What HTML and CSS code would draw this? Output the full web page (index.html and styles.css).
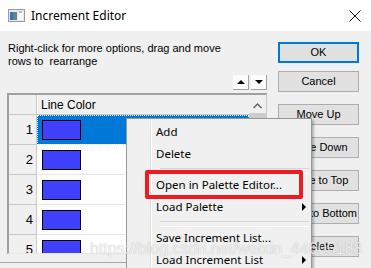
FILE: index.html
```html
<!DOCTYPE html>
<html lang="en">
<head>
  <meta charset="UTF-8" />
  <title>Increment Editor</title>
  <link rel="stylesheet" href="styles.css">
</head>
<body>
  <div class="window">
    <div class="titlebar">
      <svg class="app-icon" width="17" height="13" viewBox="0 0 17 13">
        <rect x="0.5" y="0.5" width="16" height="12" fill="#e8e8e8" stroke="#9a9a9a"/>
        <rect x="2" y="3" width="7" height="8" fill="#4d8f94"/>
        <rect x="2" y="3" width="3" height="8" fill="#3f6fae"/>
        <rect x="10" y="3" width="5" height="8" fill="#fafafa"/>
        <rect x="11" y="2" width="3" height="2" fill="#b8b8b8"/>
      </svg>
      <span class="title">Increment Editor</span>
      <svg class="close" width="12" height="12" viewBox="0 0 12 12">
        <path d="M0.5 0.5 L11.5 11.5 M11.5 0.5 L0.5 11.5" stroke="#111" stroke-width="1"/>
      </svg>
    </div>

    <div class="body">
      <div class="left">
        <p class="hint">Right-click for more options, drag and move<br>rows to&nbsp; rearrange</p>
        <div class="order-btns">
          <div class="mini"><span class="tri-up"></span></div>
          <div class="mini"><span class="tri-down"></span></div>
        </div>
        <div class="grid">
          <div class="grid-main">
            <div class="grid-row head">
              <div class="rh"></div>
              <div class="cell">Line Color</div>
            </div>
            <div class="grid-row selected">
              <div class="rh">1</div>
              <div class="cell"><span class="swatch"></span></div>
            </div>
            <div class="grid-row">
              <div class="rh">2</div>
              <div class="cell"><span class="swatch"></span></div>
            </div>
            <div class="grid-row">
              <div class="rh">3</div>
              <div class="cell"><span class="swatch"></span></div>
            </div>
            <div class="grid-row">
              <div class="rh">4</div>
              <div class="cell"><span class="swatch"></span></div>
            </div>
            <div class="grid-row">
              <div class="rh">5</div>
              <div class="cell"><span class="swatch"></span></div>
            </div>
          </div>
          <div class="vscroll">
            <svg class="chev" width="9" height="6" viewBox="0 0 9 6">
              <path d="M0.5 5 L4.5 1 L8.5 5" fill="none" stroke="#606060" stroke-width="1.4"/>
            </svg>
            <div class="thumb"></div>
          </div>
        </div>
        <div class="bottom-line"></div>
      </div>

      <div class="buttons">
        <div class="btn default">OK</div>
        <div class="btn">Cancel</div>
        <div class="btn gap">Move Up</div>
        <div class="btn gap">Move Down</div>
        <div class="btn gap">Move to Top</div>
        <div class="btn gap">Move to Bottom</div>
        <div class="btn gap">Delete</div>
      </div>
    </div>

    <!-- right-click menu over the grid -->
    <div class="menu">
      <div class="item">Add</div>
      <div class="item">Delete</div>
      <div class="sep"></div>
      <div class="item marked">Open in Palette Editor...<span class="mark"></span></div>
      <div class="item">Load Palette<span class="sub"></span></div>
      <div class="sep"></div>
      <div class="item">Save Increment List...</div>
      <div class="item">Load Increment List<span class="sub"></span></div>
    </div>

    <div class="watermark">https://blog.csdn.net/weixin_44605188</div>
  </div>
</body>
</html>
```

FILE: styles.css
```css
html, body {
  margin: 0;
  padding: 0;
}

body {
  width: 371px;
  height: 268px;
  overflow: hidden;
  background: #f0f0f0;
  font-family: "Liberation Sans", Arial, sans-serif;
  color: #000;
}

.window {
  position: relative;
  width: 371px;
  height: 268px;
  overflow: hidden;
}

.titlebar {
  height: 31px;
  background: #fff;
  display: flex;
  align-items: center;
}

.app-icon {
  margin-left: 8px;
  margin-top: -1px;
}

.title {
  margin-left: 6px;
  font-family: "Noto Sans", sans-serif;
  font-size: 12px;
  color: #000;
}

.close {
  margin-left: auto;
  margin-right: 10px;
}

.body {
  display: flex;
}

.left {
  width: 260px;
  padding-left: 7px;
}

.hint {
  margin: 0;
  padding: 11px 0 0 1px;
  font-size: 11px;
  line-height: 13px;
}

.order-btns {
  display: flex;
  justify-content: flex-end;
  gap: 2px;
  margin-top: 7px;
}

.mini {
  width: 15px;
  height: 14px;
  background: #fdfdfd;
  border-right: 1px solid #a0a0a0;
  border-bottom: 1px solid #a0a0a0;
  display: flex;
  align-items: center;
  justify-content: center;
}

.tri-up {
  width: 0;
  height: 0;
  border-left: 4px solid transparent;
  border-right: 4px solid transparent;
  border-bottom: 4px solid #000;
}

.tri-down {
  width: 0;
  height: 0;
  border-left: 4px solid transparent;
  border-right: 4px solid transparent;
  border-top: 4px solid #000;
}

.grid {
  margin-top: 3px;
  height: 158px;
  display: flex;
  border-top: 2px solid #a0a0a0;
  border-left: 2px solid #a0a0a0;
  border-right: 1px solid #c8c8c8;
  border-bottom: 1px solid #e8e8e8;
  background: #fff;
  overflow: hidden;
}

.grid-main {
  flex: 1;
}

.grid-row {
  display: flex;
  height: 30px;
}

.grid-row.head {
  height: 19px;
  background: #f0f0f0;
  border-bottom: 1px solid #c8c8c8;
}

.rh {
  width: 28px;
  background: #f0f0f0;
  border-right: 1px solid #c8c8c8;
  border-bottom: 1px solid #c8c8c8;
  box-sizing: border-box;
  text-align: right;
  padding-right: 3px;
  font-size: 13px;
  line-height: 30px;
}

.grid-row.head .rh {
  border-bottom: none;
}

.cell {
  flex: 1;
  box-sizing: border-box;
  border-bottom: 1px solid #e6e6e6;
  display: flex;
  align-items: center;
  padding-left: 5px;
}

.grid-row.head .cell {
  font-size: 12px;
  padding-left: 3px;
  border-bottom: none;
  border-left: 1px solid #fff;
}

.grid-row.selected .cell {
  background: #0078d7;
  outline: 1px dotted #fff;
  outline-offset: -1px;
}

.swatch {
  width: 37px;
  height: 18px;
  background: #4040ff;
  border: 1px solid #000;
}

.vscroll {
  width: 17px;
  background: #f0f0f0;
  display: flex;
  flex-direction: column;
  align-items: center;
}

.chev {
  margin-top: 8px;
}

.thumb {
  margin-top: 4px;
  width: 17px;
  height: 60px;
  background: #cdcdcd;
}

.bottom-line {
  margin-top: 8px;
  margin-left: -7px;
  border-top: 1px solid #a8a8a8;
}

.buttons {
  margin-left: 11px;
  padding-top: 11px;
  width: 81px;
}

.btn {
  box-sizing: border-box;
  height: 21px;
  background: #e1e1e1;
  border: 1px solid #adadad;
  font-size: 11px;
  line-height: 19px;
  text-align: center;
  white-space: nowrap;
  overflow: hidden;
  margin-top: 8px;
}

.btn.default {
  margin-top: 0;
  border: 2px solid #0078d7;
  line-height: 17px;
}

.btn.gap {
  margin-top: 12px;
}

.menu {
  position: absolute;
  left: 126px;
  top: 118px;
  width: 184px;
  height: 160px;
  padding: 2px 0;
  background: #f0f0f0;
  border: 1px solid #979797;
  box-shadow: 2px 2px 2px rgba(0, 0, 0, 0.25);
  font-family: "Noto Sans", sans-serif;
  font-size: 11.5px;
}

.menu::before {
  content: "";
  position: absolute;
  left: 23px;
  top: 2px;
  bottom: 0;
  width: 1px;
  background: #e0e0e0;
  border-right: 1px solid #fff;
}

.item {
  position: relative;
  height: 22px;
  line-height: 22px;
  padding-left: 29px;
}

.sep {
  height: 9px;
  margin-left: 33px;
  margin-right: 2px;
  box-sizing: border-box;
  border-bottom: 1px solid #fff;
  background: linear-gradient(#d7d7d7, #d7d7d7) 0 3px / 100% 1px no-repeat;
}

.mark {
  position: absolute;
  left: 18px;
  right: 8px;
  top: -4px;
  bottom: -3px;
  border: 4px solid #ed1c24;
  border-radius: 2px;
}

.sub {
  position: absolute;
  right: 5px;
  top: 7px;
  width: 0;
  height: 0;
  border-top: 4px solid transparent;
  border-bottom: 4px solid transparent;
  border-left: 4px solid #000;
}

.watermark {
  position: absolute;
  left: 90px;
  top: 240px;
  font-size: 16px;
  color: rgba(255, 255, 255, 0.8);
  text-shadow: 0 0 1px rgba(0, 0, 0, 0.3);
  white-space: nowrap;
}
```
